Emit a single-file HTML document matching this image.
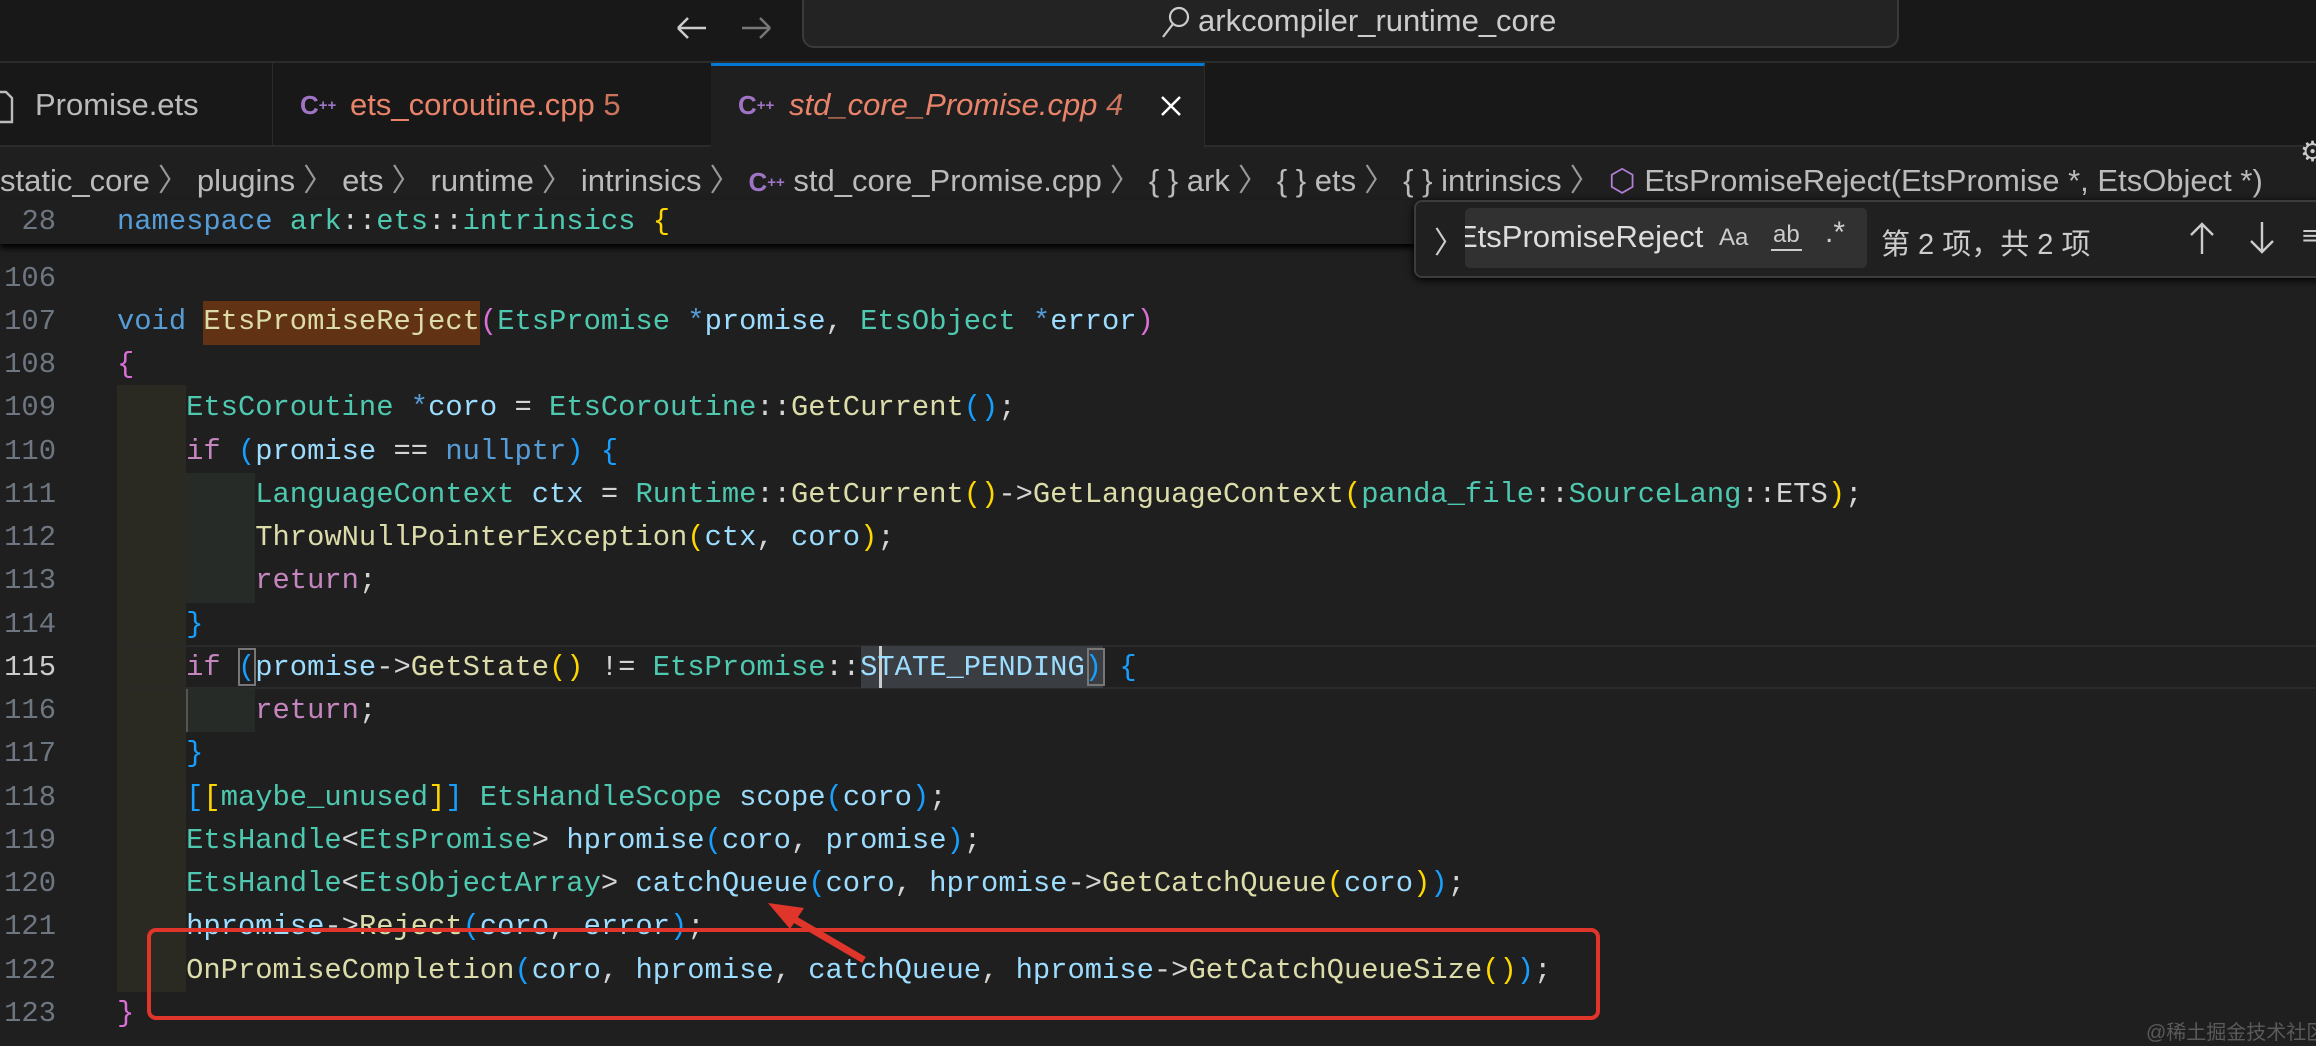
<!DOCTYPE html>
<html><head><meta charset="utf-8"><style>
*{margin:0;padding:0;box-sizing:border-box}
body{width:2316px;height:1046px;background:#1f1f1f;position:relative;overflow:hidden;font-family:"Liberation Sans","Noto Sans CJK SC",sans-serif;color:#ccc}
.abs{position:absolute}
.ln{position:absolute;left:0;width:56px;text-align:right;font-family:"Liberation Mono",monospace;font-size:28.8px;color:#6e7681;line-height:43.25px}
.cd{position:absolute;left:117px;font-family:"Liberation Mono",monospace;font-size:28.8px;color:#d4d4d4;line-height:43.25px;white-space:pre}
.k{color:#569cd6}.c{color:#c586c0}.t{color:#4ec9b0}.v{color:#9cdcfe}.f{color:#dcdcaa}
.g{color:#ffd700}.p{color:#da70d6}.b{color:#179fff}
.ch{color:#999;margin:0 8px}
</style></head><body>
<!-- title bar -->
<div class="abs" style="left:0;top:0;width:2316px;height:63px;background:#181818;border-bottom:2px solid #2b2b2b"></div>
<svg class="abs" style="left:670px;top:8px" width="110" height="40"><path d="M8 20H36M8 20L18 10M8 20L18 30" stroke="#ccc" stroke-width="2.5" fill="none"/><path d="M72 20H100M100 20L90 10M100 20L90 30" stroke="#777" stroke-width="2.5" fill="none"/></svg>
<div class="abs" style="left:802px;top:-10px;width:1097px;height:58px;background:#232323;border:2px solid #3a3a3a;border-radius:12px"></div>
<svg class="abs" style="left:1158px;top:4px" width="34" height="36"><circle cx="21" cy="13" r="9" stroke="#ccc" stroke-width="2.2" fill="none"/><path d="M15 20L5 33" stroke="#ccc" stroke-width="2.2"/></svg>
<div class="abs" style="left:1198px;top:3px;font-size:31px;color:#ccc">arkcompiler_runtime_core</div>
<!-- tabs -->
<div class="abs" style="left:0;top:63px;width:2316px;height:84px;background:#181818;border-bottom:2px solid #2b2b2b"></div>
<div class="abs" style="left:272px;top:63px;width:1px;height:84px;background:#2b2b2b"></div>
<div class="abs" style="left:711px;top:63px;width:494px;height:86px;background:#1f1f1f;border-top:3px solid #0078d4;border-right:1px solid #2b2b2b"></div>
<svg class="abs" style="left:0;top:90px" width="14" height="34"><path d="M-8 2H6L12 8V32H-8" stroke="#bbb" stroke-width="2.4" fill="none"/></svg>
<div class="abs" style="left:35px;top:87px;font-size:31px;color:#bbb">Promise.ets</div>
<div class="abs" style="left:300px;top:90px;font-size:26px;color:#a074c4;font-weight:bold">C<span style="font-size:15px;vertical-align:4px">++</span></div>
<div class="abs" style="left:350px;top:87px;font-size:31px;color:#e9836a">ets_coroutine.cpp <span style="color:#c9735c">5</span></div>
<div class="abs" style="left:738px;top:90px;font-size:26px;color:#a074c4;font-weight:bold">C<span style="font-size:15px;vertical-align:4px">++</span></div>
<div class="abs" style="left:789px;top:87px;font-size:31px;color:#e9836a;font-style:italic">std_core_Promise.cpp <span style="color:#c9735c">4</span></div>
<svg class="abs" style="left:1160px;top:95px" width="22" height="22"><path d="M2 2L20 20M20 2L2 20" stroke="#fff" stroke-width="2.5"/></svg>
<div class="abs" style="left:2300px;top:135px;font-size:28px;color:#ccc">⚙</div>
<!-- breadcrumbs -->
<div class="abs" style="left:0;top:155px;font-size:31px;color:#bbb;white-space:pre">static_core<span class="ch">〉</span>plugins<span class="ch">〉</span>ets<span class="ch">〉</span>runtime<span class="ch">〉</span>intrinsics<span class="ch">〉</span><b style="color:#a074c4;font-size:26px">C<span style="font-size:15px;vertical-align:4px">++</span></b> std_core_Promise.cpp<span class="ch">〉</span>{ } ark<span class="ch">〉</span>{ } ets<span class="ch">〉</span>{ } intrinsics<span class="ch">〉</span><span style="color:#b180d7">⬡</span> EtsPromiseReject(EtsPromise *, EtsObject *)</div>
<!-- indent backgrounds -->
<div class="abs" style="left:117px;top:385px;width:69px;height:607px;background:#2a2a22"></div>
<div class="abs" style="left:186px;top:473px;width:69px;height:130px;background:#262b27"></div>
<div class="abs" style="left:186px;top:689px;width:69px;height:43px;background:#262b27;border-left:2px solid #555"></div>
<!-- current line -->
<div class="abs" style="left:120px;top:645px;width:2196px;height:44px;border-top:2px solid #2a2a2a;border-bottom:2px solid #2a2a2a"></div>
<!-- highlights -->
<div class="abs" style="left:203px;top:301px;width:277px;height:44px;background:#613214"></div>
<div class="abs" style="left:861px;top:646px;width:242px;height:42px;background:#3a3d41"></div>
<div class="abs" style="left:238px;top:648px;width:18px;height:38px;border:2px solid #777"></div>
<div class="abs" style="left:1087px;top:648px;width:18px;height:38px;border:2px solid #777"></div>
<div class="abs" style="left:879px;top:646px;width:3px;height:42px;background:#ccc"></div>
<!-- code -->
<div class="ln" style="top:256.5px">106</div>
<div class="ln" style="top:299.75px">107</div><div class="cd" style="top:299.75px"><span class="k">void</span> <span class="f">EtsPromiseReject</span><span class="p">(</span><span class="t">EtsPromise</span> <span class="k">*</span><span class="v">promise</span>, <span class="t">EtsObject</span> <span class="k">*</span><span class="v">error</span><span class="p">)</span></div>
<div class="ln" style="top:343px">108</div><div class="cd" style="top:343px"><span class="p">{</span></div>
<div class="ln" style="top:386.25px">109</div><div class="cd" style="top:386.25px">    <span class="t">EtsCoroutine</span> <span class="k">*</span><span class="v">coro</span> = <span class="t">EtsCoroutine</span>::<span class="f">GetCurrent</span><span class="b">()</span>;</div>
<div class="ln" style="top:429.5px">110</div><div class="cd" style="top:429.5px">    <span class="c">if</span> <span class="b">(</span><span class="v">promise</span> == <span class="k">nullptr</span><span class="b">)</span> <span class="b">{</span></div>
<div class="ln" style="top:472.75px">111</div><div class="cd" style="top:472.75px">        <span class="t">LanguageContext</span> <span class="v">ctx</span> = <span class="t">Runtime</span>::<span class="f">GetCurrent</span><span class="g">()</span>-><span class="f">GetLanguageContext</span><span class="g">(</span><span class="t">panda_file</span>::<span class="t">SourceLang</span>::ETS<span class="g">)</span>;</div>
<div class="ln" style="top:516px">112</div><div class="cd" style="top:516px">        <span class="f">ThrowNullPointerException</span><span class="g">(</span><span class="v">ctx</span>, <span class="v">coro</span><span class="g">)</span>;</div>
<div class="ln" style="top:559.25px">113</div><div class="cd" style="top:559.25px">        <span class="c">return</span>;</div>
<div class="ln" style="top:602.5px">114</div><div class="cd" style="top:602.5px">    <span class="b">}</span></div>
<div class="ln" style="top:645.75px;color:#ccc">115</div><div class="cd" style="top:645.75px">    <span class="c">if</span> <span class="b">(</span><span class="v">promise</span>-><span class="f">GetState</span><span class="g">()</span> != <span class="t">EtsPromise</span>::<span class="v">STATE_PENDING</span><span class="b">)</span> <span class="b">{</span></div>
<div class="ln" style="top:689px">116</div><div class="cd" style="top:689px">        <span class="c">return</span>;</div>
<div class="ln" style="top:732.25px">117</div><div class="cd" style="top:732.25px">    <span class="b">}</span></div>
<div class="ln" style="top:775.5px">118</div><div class="cd" style="top:775.5px">    <span class="b">[</span><span class="g">[</span><span class="t">maybe_unused</span><span class="g">]</span><span class="b">]</span> <span class="t">EtsHandleScope</span> <span class="v">scope</span><span class="b">(</span><span class="v">coro</span><span class="b">)</span>;</div>
<div class="ln" style="top:818.75px">119</div><div class="cd" style="top:818.75px">    <span class="t">EtsHandle</span>&lt;<span class="t">EtsPromise</span>&gt; <span class="v">hpromise</span><span class="b">(</span><span class="v">coro</span>, <span class="v">promise</span><span class="b">)</span>;</div>
<div class="ln" style="top:862px">120</div><div class="cd" style="top:862px">    <span class="t">EtsHandle</span>&lt;<span class="t">EtsObjectArray</span>&gt; <span class="v">catchQueue</span><span class="b">(</span><span class="v">coro</span>, <span class="v">hpromise</span>-><span class="f">GetCatchQueue</span><span class="g">(</span><span class="v">coro</span><span class="g">)</span><span class="b">)</span>;</div>
<div class="ln" style="top:905.25px">121</div><div class="cd" style="top:905.25px">    <span class="v">hpromise</span>-><span class="f">Reject</span><span class="b">(</span><span class="v">coro</span>, <span class="v">error</span><span class="b">)</span>;</div>
<div class="ln" style="top:948.5px">122</div><div class="cd" style="top:948.5px">    <span class="f">OnPromiseCompletion</span><span class="b">(</span><span class="v">coro</span>, <span class="v">hpromise</span>, <span class="v">catchQueue</span>, <span class="v">hpromise</span>-><span class="f">GetCatchQueueSize</span><span class="g">()</span><span class="b">)</span>;</div>
<div class="ln" style="top:991.75px">123</div><div class="cd" style="top:991.75px"><span class="p">}</span></div>
<!-- sticky line -->
<div class="abs" style="left:0;top:200px;width:2316px;height:44px;background:#1f1f1f;box-shadow:0 4px 6px #000"></div>
<div class="ln" style="top:200px">28</div><div class="cd" style="top:200px"><span class="k">namespace</span> <span class="t">ark</span>::<span class="t">ets</span>::<span class="t">intrinsics</span> <span class="g">{</span></div>
<!-- find widget -->
<div class="abs" style="left:1414px;top:200px;width:920px;height:78px;background:#202020;border:2px solid #3c3c3c;border-radius:8px;box-shadow:0 2px 8px #000"></div>
<div class="abs" style="left:1434px;top:218px;font-size:30px;color:#ccc">〉</div>
<div class="abs" style="left:1465px;top:208px;width:402px;height:60px;background:#313131;border-radius:5px;overflow:hidden">
<div class="abs" style="left:-8px;top:11px;font-size:31px;color:#ddd;white-space:nowrap">EtsPromiseReject</div>
<div class="abs" style="left:254px;top:16px;font-size:24px;color:#ccc">Aa</div>
<div class="abs" style="left:306px;top:13px;font-size:24px;color:#ccc;border-bottom:2px solid #ccc;padding:0 2px">ab</div>
<div class="abs" style="left:360px;top:8px;font-size:30px;color:#ccc">.*</div></div>
<div class="abs" style="left:1881px;top:221px;font-size:29px;color:#ccc">第 2 项，共 2 项</div>
<svg class="abs" style="left:2188px;top:220px" width="100" height="36"><path d="M14 34V4M3 15L14 4L25 15" stroke="#ccc" stroke-width="2.4" fill="none"/><path d="M74 2V32M63 21L74 32L85 21" stroke="#ccc" stroke-width="2.4" fill="none"/></svg>
<div class="abs" style="left:2302px;top:220px;font-size:28px;color:#ccc">≡</div>
<!-- red annotation -->
<div class="abs" style="left:147px;top:928px;width:1453px;height:92px;border:4px solid #e0352b;border-radius:9px"></div>
<svg class="abs" style="left:740px;top:880px" width="150" height="100"><path d="M124 80L42 32" stroke="#e0352b" stroke-width="7"/><path d="M28 23L64 28L50 49Z" fill="#e0352b"/></svg>
<div class="abs" style="left:2146px;top:1016px;font-size:20px;color:#5a5a5a;white-space:nowrap">@稀土掘金技术社区</div>
</body></html>
